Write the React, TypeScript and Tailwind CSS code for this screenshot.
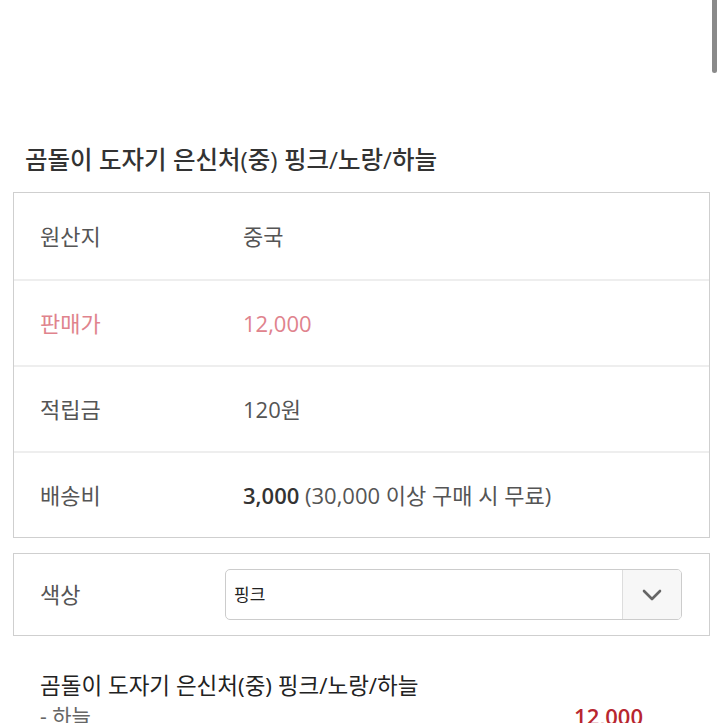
import * as React from "react";

const font = { fontFamily: '"Open Sans", "Noto Sans CJK KR", sans-serif' };

type Row = { label: string; value: React.ReactNode; accent?: boolean };

const rows: Row[] = [
  { label: "원산지", value: "중국" },
  { label: "판매가", value: "12,000", accent: true },
  { label: "적립금", value: "120원" },
  {
    label: "배송비",
    value: (
      <>
        <span className="font-semibold text-[#333]">3,000</span> (30,000 이상 구매 시 무료)
      </>
    ),
  },
];

export default function App() {
  return (
    <div className="relative h-[723px] w-[723px] overflow-hidden bg-white" style={font}>
      {/* scrollbar thumb */}
      <div className="absolute right-[6px] top-0 h-[73px] w-[5px] rounded-b-full bg-[#8a8a8a]" />

      <div className="pt-[143px]">
        <h1 className="pl-[25px] text-[24.5px] leading-[34px] font-medium text-[#333]">
          곰돌이 도자기 은신처(중) 핑크/노랑/하늘
        </h1>

        <div className="mx-[13px] mt-[15px] border border-[#cfcfcf]">
          {rows.map((row, i) => (
            <div
              key={row.label}
              className={`flex h-[86px] items-center pl-[26px] text-[22px] ${
                i > 0 ? "border-t-2 border-[#eeeeee]" : ""
              } ${row.accent ? "text-[#e0838d]" : "text-[#555]"}`}
            >
              <div className="w-[203px]">{row.label}</div>
              <div>{row.value}</div>
            </div>
          ))}
        </div>

        <div className="mx-[13px] mt-[15px] flex h-[83px] items-center border border-[#cfcfcf] pl-[26px] pr-[27px]">
          <div className="w-[185px] text-[22px] text-[#555]">색상</div>
          <div className="flex h-[51px] flex-1 items-stretch overflow-hidden rounded-[5px] border border-[#cccccc]">
            <div className="flex flex-1 items-center pl-[8px] text-[17px] text-[#222]">핑크</div>
            <div className="flex w-[59px] items-center justify-center border-l border-[#dddddd] bg-[#f7f7f7]">
              <svg width="22" height="14" viewBox="0 0 22 14" fill="none">
                <path d="M3 3l8 8 8-8" stroke="#666" strokeWidth="2.6" strokeLinecap="round" strokeLinejoin="round" />
              </svg>
            </div>
          </div>
        </div>

        <div className="mt-[34px] px-[40px]">
          <div className="text-[22.5px] leading-[32px] text-[#222]">
            곰돌이 도자기 은신처(중) 핑크/노랑/하늘
          </div>
          <div className="flex items-center justify-between pr-[40px]">
            <span className="text-[21px] leading-[28px] text-[#666]">- 하늘</span>
            <span className="text-[22px] font-semibold leading-[28px] text-[#b8262f]">12,000</span>
          </div>
        </div>
      </div>
    </div>
  );
}
